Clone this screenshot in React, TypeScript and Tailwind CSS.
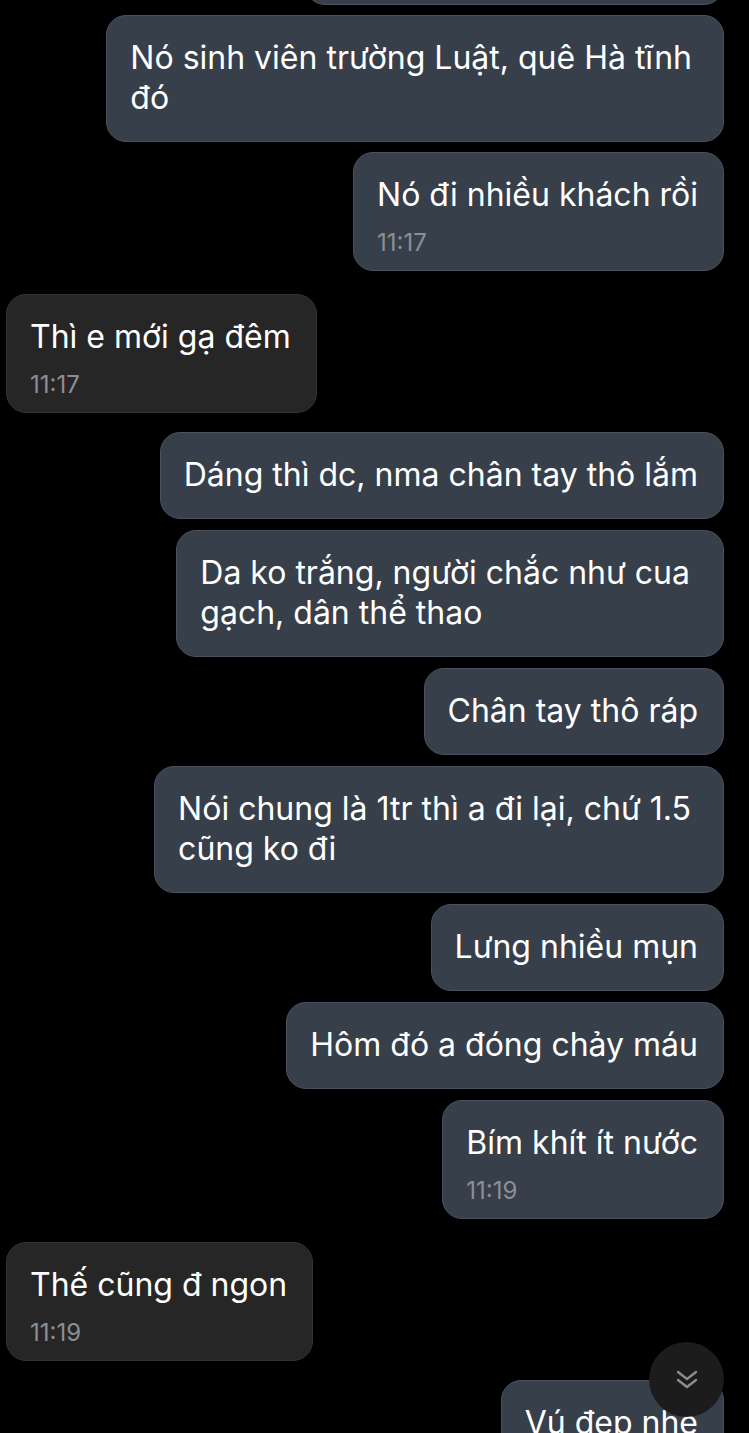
import React from "react";

type Msg = {
  lines: string[];
  out: boolean;
  time?: string;
  mt: string;
  pr?: string;
};

const messages: Msg[] = [
  { lines: ["Nó sinh viên trường Luật, quê Hà tĩnh", "đó"], out: true, mt: "mt-[10px]", pr: "pr-[31px]" },
  { lines: ["Nó đi nhiều khách rồi"], out: true, time: "11:17", mt: "mt-[10px]" },
  { lines: ["Thì e mới gạ đêm"], out: false, time: "11:17", mt: "mt-[23px]" },
  { lines: ["Dáng thì dc, nma chân tay thô lắm"], out: true, mt: "mt-[19px]" },
  { lines: ["Da ko trắng, người chắc như cua", "gạch, dân thể thao"], out: true, mt: "mt-[11px]", pr: "pr-[33px]" },
  { lines: ["Chân tay thô ráp"], out: true, mt: "mt-[11px]" },
  { lines: ["Nói chung là 1tr thì a đi lại, chứ 1.5", "cũng ko đi"], out: true, mt: "mt-[11px]", pr: "pr-[32px]" },
  { lines: ["Lưng nhiều mụn"], out: true, mt: "mt-[11px]" },
  { lines: ["Hôm đó a đóng chảy máu"], out: true, mt: "mt-[11px]" },
  { lines: ["Bím khít ít nước"], out: true, time: "11:19", mt: "mt-[11px]" },
  { lines: ["Thế cũng đ ngon"], out: false, time: "11:19", mt: "mt-[23px]" },
  { lines: ["Vú đẹp nhé"], out: true, mt: "mt-[19px]" },
];

const Bubble = ({ msg }: { msg: Msg }) => {
  const color = msg.out
    ? "bg-[#373f4b] border-[#4a525e]"
    : "bg-[#262626] border-[#333333]";
  return (
    <div className={`flex ${msg.out ? "justify-end" : "justify-start"} ${msg.mt}`}>
      <div
        className={`w-fit rounded-[20px] border pl-[23px] ${msg.pr ?? "pr-[25px]"} pt-[22px] ${
          msg.time ? "pb-[13px]" : "pb-[23px]"
        } ${color}`}
      >
        <div className="whitespace-nowrap text-[32px] leading-[40px] text-white">
          {msg.lines.map((l, i) => (
            <div key={i}>{l}</div>
          ))}
        </div>
        {msg.time && (
          <div className="mt-[14px] text-[24px] leading-[28px] text-[#8a8f97]">
            {msg.time}
          </div>
        )}
      </div>
    </div>
  );
};

export default function App() {
  return (
    <div
      className="relative h-[1433px] w-[749px] overflow-hidden bg-black"
      style={{ fontFamily: "Inter, 'Noto Sans', sans-serif" }}
    >
      <div className="flex flex-col pl-[6px] pr-[25px]">
        {/* bubble cut off at the top */}
        <div className="-mt-[82px] flex justify-end">
          <div className="h-[87px] w-[419px] rounded-[20px] border border-[#4a525e] bg-[#373f4b]" />
        </div>
        {messages.map((m, i) => (
          <Bubble key={i} msg={m} />
        ))}
      </div>

      <div className="absolute left-[649px] top-[1342px] flex h-[75px] w-[75px] items-center justify-center rounded-full bg-[#1c1c1c]">
        <svg width="22" height="22" viewBox="0 0 22 22" fill="none" stroke="#8c8c8c" strokeWidth="2.4" strokeLinecap="round" strokeLinejoin="round">
          <polyline points="2,3 11,10 20,3" />
          <polyline points="2,11 11,18 20,11" />
        </svg>
      </div>
    </div>
  );
}
